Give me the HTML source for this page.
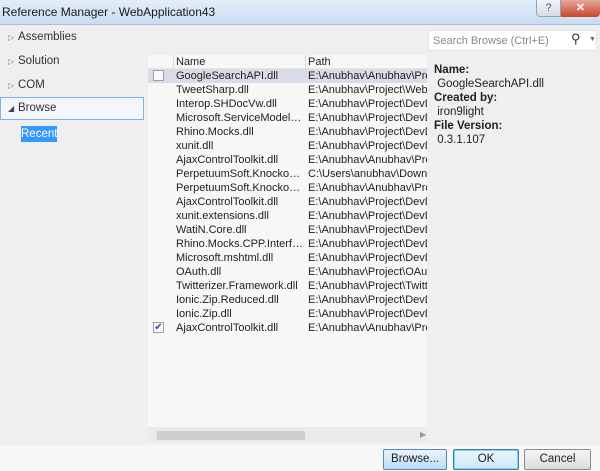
<!DOCTYPE html>
<html><head><meta charset="utf-8"><style>
*{margin:0;padding:0;box-sizing:border-box}
body{width:600px;height:471px;overflow:hidden;background:#efeff2;font-family:"Liberation Sans",sans-serif;font-size:11px;color:#1e1e1e;position:relative}
.abs{position:absolute}
#title{left:0;top:0;width:600px;height:25px;background:linear-gradient(#e4eef9,#c9dcf1);border-bottom:1px solid #a9bfd8}
#title span{position:absolute;left:2px;top:5px;font-size:12px;color:#1a1a1a}
.nav{left:8px;font-size:11.5px;color:#333}
.tri{display:inline-block;width:10px;color:#888;font-size:8px}
#list{left:148px;top:55px;width:279px;height:387px;background:#f7f7f7}
.row{position:absolute;left:0;width:279px;height:14px;line-height:14px;white-space:nowrap;overflow:hidden}
.row .n{position:absolute;left:28px;width:128px;overflow:hidden;text-overflow:ellipsis}
.row .p{position:absolute;left:160px;width:119px;overflow:hidden}
.cb{position:absolute;left:5px;top:1px;width:11px;height:11px;border:1px solid #a0a0a0;background:#fafafa}
.btn{top:449px;height:21px;border:1px solid #8b8b8b;border-radius:2px;background:linear-gradient(#f5f5f5,#dcdcdc);text-align:center;line-height:19px;font-size:11.5px}
</style></head><body>
<div id="title" class="abs"><span>Reference Manager - WebApplication43</span>
<div class="abs" style="left:536px;top:0;width:25px;height:17px;border:1px solid #8aa;border-top:none;border-radius:0 0 0 4px;background:linear-gradient(#f2f5f9,#d5dde8);text-align:center;font-size:11px;color:#555;line-height:16px">?</div>
<div class="abs" style="left:561px;top:0;width:39px;height:17px;border-radius:0 0 4px 0;background:linear-gradient(#e8a89a,#c8452c);text-align:center;color:#fff;font-weight:bold;line-height:16px">✕</div>
</div>
<div class="abs nav" style="top:31px"><span class="tri">▷</span>Assemblies</div>
<div class="abs nav" style="top:55px"><span class="tri">▷</span>Solution</div>
<div class="abs nav" style="top:79px"><span class="tri">▷</span>COM</div>
<div class="abs" style="left:0;top:97px;width:144px;height:23px;border:1px solid #7eb4ea;background:#f3f6fa"></div>
<div class="abs nav" style="top:102px"><span class="tri" style="color:#444">◢</span>Browse</div>
<div class="abs" style="left:21px;top:126px;width:36px;height:16px;background:#3399ff;color:#fff;font-size:11.5px;line-height:16px;text-align:center">Recent</div>

<div id="list" class="abs">
<div class="abs" style="left:0;top:0;width:279px;height:14px;line-height:14px;border-bottom:1px solid #e6e6e6">
<span class="abs" style="left:25px;top:0;width:1px;height:14px;background:#ddd"></span>
<span class="abs" style="left:28px">Name</span>
<span class="abs" style="left:157px;top:0;width:1px;height:14px;background:#ddd"></span>
<span class="abs" style="left:160px">Path</span></div>
<div class="row" style="top:14px;background:#d9dbe6"><span class="cb"></span><span class="n">GoogleSearchAPI.dll</span><span class="p">E:\Anubhav\Anubhav\Pro</span></div>
<div class="row" style="top:28px"><span class="n">TweetSharp.dll</span><span class="p">E:\Anubhav\Project\Web</span></div>
<div class="row" style="top:42px"><span class="n">Interop.SHDocVw.dll</span><span class="p">E:\Anubhav\Project\DevD</span></div>
<div class="row" style="top:56px"><span class="n">Microsoft.ServiceModel.Web.dll</span><span class="p">E:\Anubhav\Project\DevD</span></div>
<div class="row" style="top:70px"><span class="n">Rhino.Mocks.dll</span><span class="p">E:\Anubhav\Project\DevD</span></div>
<div class="row" style="top:84px"><span class="n">xunit.dll</span><span class="p">E:\Anubhav\Project\DevD</span></div>
<div class="row" style="top:98px"><span class="n">AjaxControlToolkit.dll</span><span class="p">E:\Anubhav\Anubhav\Pro</span></div>
<div class="row" style="top:112px"><span class="n">PerpetuumSoft.Knockout.dll</span><span class="p">C:\Users\anubhav\Downl</span></div>
<div class="row" style="top:126px"><span class="n">PerpetuumSoft.Knockout.dll</span><span class="p">E:\Anubhav\Anubhav\Pro</span></div>
<div class="row" style="top:140px"><span class="n">AjaxControlToolkit.dll</span><span class="p">E:\Anubhav\Project\DevD</span></div>
<div class="row" style="top:154px"><span class="n">xunit.extensions.dll</span><span class="p">E:\Anubhav\Project\DevD</span></div>
<div class="row" style="top:168px"><span class="n">WatiN.Core.dll</span><span class="p">E:\Anubhav\Project\DevD</span></div>
<div class="row" style="top:182px"><span class="n">Rhino.Mocks.CPP.Interfaces.dll</span><span class="p">E:\Anubhav\Project\DevD</span></div>
<div class="row" style="top:196px"><span class="n">Microsoft.mshtml.dll</span><span class="p">E:\Anubhav\Project\DevD</span></div>
<div class="row" style="top:210px"><span class="n">OAuth.dll</span><span class="p">E:\Anubhav\Project\OAut</span></div>
<div class="row" style="top:224px"><span class="n">Twitterizer.Framework.dll</span><span class="p">E:\Anubhav\Project\Twitt</span></div>
<div class="row" style="top:238px"><span class="n">Ionic.Zip.Reduced.dll</span><span class="p">E:\Anubhav\Project\DevD</span></div>
<div class="row" style="top:252px"><span class="n">Ionic.Zip.dll</span><span class="p">E:\Anubhav\Project\DevD</span></div>
<div class="row" style="top:266px"><span class="cb" style="color:#2a4fa8;font-size:10px;line-height:9px;text-align:center">✔</span><span class="n">AjaxControlToolkit.dll</span><span class="p">E:\Anubhav\Anubhav\Pro</span></div>
<div class="abs" style="left:0;top:372px;width:279px;height:15px;background:#eaeaea"></div>
<div class="abs" style="left:8px;top:375px;color:#999;font-size:8px">◀</div>
<div class="abs" style="left:9px;top:376px;width:148px;height:9px;background:#cfcfcf"></div>
<div class="abs" style="left:272px;top:375px;color:#999;font-size:8px">▶</div>
</div>

<div class="abs" style="left:428px;top:30px;width:169px;height:21px;background:#fff;border:1px solid #e3e3e3"></div>
<div class="abs" style="left:433px;top:35px;color:#888;font-size:11px">Search Browse (Ctrl+E)</div>
<div class="abs" style="left:571px;top:31px;font-size:13px;color:#333">⚲</div>
<div class="abs" style="left:589px;top:36px;font-size:7px;color:#666">▼</div>

<div class="abs" style="left:434px;top:63px;line-height:14px;font-size:11.5px">
<b>Name:</b><br>&nbsp;GoogleSearchAPI.dll<br><b>Created by:</b><br>&nbsp;iron9light<br><b>File Version:</b><br>&nbsp;0.3.1.107</div>

<div class="abs" style="left:0;top:445px;width:600px;height:26px;background:#f7f7f7"></div>
<div class="abs btn" style="left:383px;width:64px;border-color:#5b87b8;background:linear-gradient(#eaf4fc,#bcdcf4)">Browse...</div>
<div class="abs btn" style="left:453px;width:66px;border-color:#3c7fb1;box-shadow:inset 0 0 0 1px #7fd0f5;background:linear-gradient(#eef7fd,#cbe6f7)">OK</div>
<div class="abs btn" style="left:524px;width:67px">Cancel</div>
</body></html>
